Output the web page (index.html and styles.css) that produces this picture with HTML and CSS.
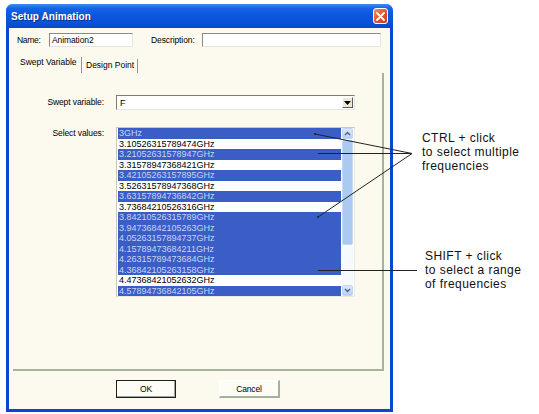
FILE: index.html
```html
<!DOCTYPE html>
<html>
<head>
<meta charset="utf-8">
<link rel="stylesheet" href="styles.css">
</head>
<body>
<div class="page">
  <div class="window">
    <div class="titlebar">
      <span class="title">Setup Animation</span>
      <span class="close"><svg width="9" height="9" viewBox="0 0 9 9"><path d="M1 1 L8 8 M8 1 L1 8" stroke="#fff" stroke-width="1.8" stroke-linecap="round"/></svg></span>
    </div>
    <div class="body">
      <div class="namerow">
        <span class="lbl-name">Name:</span>
        <div class="input in-name">Animation2</div>
        <span class="lbl-desc">Description:</span>
        <div class="input in-desc"></div>
      </div>
      <div class="tabs">
        <div class="tab tab1 active">Swept Variable</div>
        <div class="tab tab2">Design Point</div>
      </div>
      <div class="panel">
        <div class="form">
          <div class="lbl lbl-swept">Swept variable:</div>
          <div class="combo">
            <span class="combo-text">F</span>
            <span class="drop"><svg width="7" height="4" viewBox="0 0 7 4"><path d="M0 0 H7 L3.5 4 Z" fill="#000"/></svg></span>
          </div>
          <div class="lbl lbl-select">Select values:</div>
          <div class="list">
            <div class="items">
              <div class="item sel">3GHz</div>
              <div class="item">3.10526315789474GHz</div>
              <div class="item sel">3.21052631578947GHz</div>
              <div class="item">3.31578947368421GHz</div>
              <div class="item sel">3.42105263157895GHz</div>
              <div class="item">3.52631578947368GHz</div>
              <div class="item sel">3.63157894736842GHz</div>
              <div class="item">3.73684210526316GHz</div>
              <div class="item sel">3.84210526315789GHz</div>
              <div class="item sel">3.94736842105263GHz</div>
              <div class="item sel">4.05263157894737GHz</div>
              <div class="item sel">4.15789473684211GHz</div>
              <div class="item sel">4.26315789473684GHz</div>
              <div class="item sel">4.36842105263158GHz</div>
              <div class="item">4.47368421052632GHz</div>
              <div class="item sel">4.57894736842105GHz</div>
            </div>
            <div class="scroll">
              <div class="sbtn"><svg width="7" height="5" viewBox="0 0 7 5"><path d="M1 4 L3.5 1.5 L6 4" fill="none" stroke="#4a5f8a" stroke-width="1.3"/></svg></div>
              <div class="thumb"></div>
              <div class="track"></div>
              <div class="sbtn"><svg width="7" height="5" viewBox="0 0 7 5"><path d="M1 1 L3.5 3.5 L6 1" fill="none" stroke="#4a5f8a" stroke-width="1.3"/></svg></div>
            </div>
          </div>
        </div>
      </div>
      <div class="buttons">
        <div class="btn btn-ok">OK</div>
        <div class="btn btn-cancel">Cancel</div>
      </div>
    </div>
  </div>
  <div class="notes">
    <div class="note note-ctrl">CTRL + click<br>to select multiple<br>frequencies</div>
    <div class="note note-shift">SHIFT + click<br>to select a range<br>of frequencies</div>
  </div>
  <svg class="callouts" width="539" height="414" viewBox="0 0 539 414">
    <g stroke="#222" stroke-width="1" fill="none">
      <line x1="315" y1="134" x2="412" y2="153.5"/>
      <line x1="318" y1="153.5" x2="412" y2="153.5"/>
      <line x1="318" y1="217" x2="412" y2="153.5"/>
      <line x1="318" y1="270.5" x2="417" y2="270.5"/>
    </g>
    <g fill="#222">
      <circle cx="315" cy="134" r="1"/>
      <circle cx="318" cy="217" r="1"/>
    </g>
  </svg>
</div>
</body>
</html>
```

FILE: styles.css
```css
* { box-sizing: border-box; }

html, body {
  margin: 0;
  padding: 0;
  background: #ffffff;
}

body {
  font-family: "Liberation Sans", Arial, sans-serif;
  color: #000;
}

.page {
  position: relative;
  width: 539px;
  height: 414px;
  display: flex;
  align-items: flex-start;
}

.window {
  margin: 4px 0 0 6px;
  width: 387px;
  height: 408px;
  background: #fcf9ef;
  border: 3px solid #0a46d4;
  border-top: none;
  border-radius: 7px 7px 0 0;
  display: flex;
  flex-direction: column;
}

.titlebar {
  margin: 0 -3px;
  height: 24px;
  border-radius: 7px 7px 0 0;
  background: linear-gradient(to bottom, #3d8bf5 0%, #1563e6 18%, #0a56dc 50%, #0752d8 80%, #0a48c8 100%);
  display: flex;
  align-items: center;
  justify-content: space-between;
  padding: 0 5px 0 5px;
}

.title {
  color: #ffffff;
  font-weight: bold;
  font-size: 10px;
  letter-spacing: 0.05px;
  text-shadow: 1px 1px 0 #0a2f8a;
}

.close {
  width: 15px;
  height: 16px;
  border: 1px solid #ffffff;
  border-radius: 3px;
  background: linear-gradient(135deg, #f0906c 0%, #e0582e 50%, #c8401c 100%);
  display: flex;
  align-items: center;
  justify-content: center;
}

.body {
  padding: 5px 0 0 4px;
  display: flex;
  flex-direction: column;
  font-size: 8.5px;
  letter-spacing: -0.1px;
}

.namerow {
  height: 14px;
  display: flex;
  align-items: center;
}

.lbl-name {
  width: 36px;
  padding-left: 4px;
  letter-spacing: -0.3px;
}

.lbl-desc {
  margin-left: 18px;
  width: 51px;
}

.input {
  height: 14px;
  background: #ffffff;
  border-top: 1px solid #8a8a86;
  border-left: 1px solid #8a8a86;
  border-right: 1px solid #e6e4dc;
  border-bottom: 1px solid #e6e4dc;
  padding-left: 2px;
  line-height: 12px;
}

.in-name { width: 84px; }
.in-desc { width: 179px; }

.tabs {
  margin-top: 8px;
  height: 18px;
  display: flex;
  align-items: flex-end;
}

.tab {
  height: 14px;
  border-right: 1px solid #8e9488;
  line-height: 12px;
  letter-spacing: 0;
}

.tab1 {
  width: 69px;
  padding-left: 7px;
  height: 16px;
  line-height: 11px;
}

.tab2 {
  width: 56px;
  padding-left: 3px;
  border-left: 1px solid #ffffff;
}

.panel {
  width: 371px;
  height: 298px;
  border-right: 2px solid #a9b29e;
  border-bottom: 2px solid #a9b29e;
  padding-top: 22px;
}

.form {
  display: grid;
  grid-template-columns: 91px 239px;
  column-gap: 12px;
  row-gap: 17px;
  align-items: start;
}

.lbl {
  text-align: right;
  padding-top: 2px;
}

.lbl-select { padding-top: 1px; }

.combo {
  height: 15px;
  background: #ffffff;
  border-top: 1px solid #7c7c78;
  border-left: 1px solid #7c7c78;
  border-right: 1px solid #e8e6de;
  border-bottom: 1px solid #e8e6de;
  display: flex;
  align-items: center;
  justify-content: space-between;
  padding: 0 1px 0 3px;
  font-size: 9px;
  letter-spacing: 0;
}

.drop {
  width: 11px;
  height: 11px;
  background: #ece9d8;
  border-top: 1px solid #ffffff;
  border-left: 1px solid #ffffff;
  border-right: 1px solid #5c5c58;
  border-bottom: 1px solid #5c5c58;
  display: flex;
  align-items: center;
  justify-content: center;
}

.list {
  height: 170px;
  background: #ffffff;
  border-top: 1px solid #c4cab6;
  border-left: 1px solid #c4cab6;
  border-right: 1px solid #e8eadf;
  border-bottom: 1px solid #e8eadf;
  display: flex;
  padding: 0 1px 0 1px;
}

.items {
  flex: 1;
  display: flex;
  flex-direction: column;
  padding-right: 1px;
}

.item {
  height: 10.5px;
  line-height: 10.5px;
  font-size: 9px;
  letter-spacing: 0;
  padding-left: 1px;
  white-space: nowrap;
}

.item.sel {
  background: #3b5ec6;
  color: #c6d4f6;
}

.scroll {
  width: 11px;
  display: flex;
  flex-direction: column;
  background: #f6f9fd;
}

.sbtn {
  height: 11px;
  background: linear-gradient(to bottom, #dbe8fb, #b8d0f4);
  border: 1px solid #c2d6f4;
  border-radius: 2px;
  display: flex;
  align-items: center;
  justify-content: center;
}

.thumb {
  height: 105px;
  margin-top: 1px;
  background: #abcaf1;
  border: 1px solid #c4daf6;
  border-radius: 2px;
}

.track {
  flex: 1;
}

.buttons {
  margin-top: 9px;
  display: flex;
  padding-left: 103px;
  gap: 43px;
}

.btn {
  height: 18px;
  display: flex;
  align-items: center;
  justify-content: center;
  font-size: 8.5px;
  letter-spacing: -0.2px;
  background: #fdfcf7;
}

.btn-ok {
  width: 60px;
  border: 1px solid #1e1e1e;
  box-shadow: inset -1px -1px 0 #9ea496;
}

.btn-cancel {
  width: 61px;
  border-top: 1px solid #ffffff;
  border-left: 1px solid #ffffff;
  border-right: 2px solid #a7b09c;
  border-bottom: 2px solid #a7b09c;
}

.notes {
  display: flex;
  flex-direction: column;
  padding-left: 29px;
}

.note {
  font-size: 12px;
  line-height: 14px;
  letter-spacing: 0.45px;
  color: #111;
  white-space: nowrap;
}

.note-ctrl { margin-top: 131px; }
.note-shift { margin-top: 76px; margin-left: 3px; }

.callouts {
  position: absolute;
  left: 0;
  top: 0;
  pointer-events: none;
}
```
